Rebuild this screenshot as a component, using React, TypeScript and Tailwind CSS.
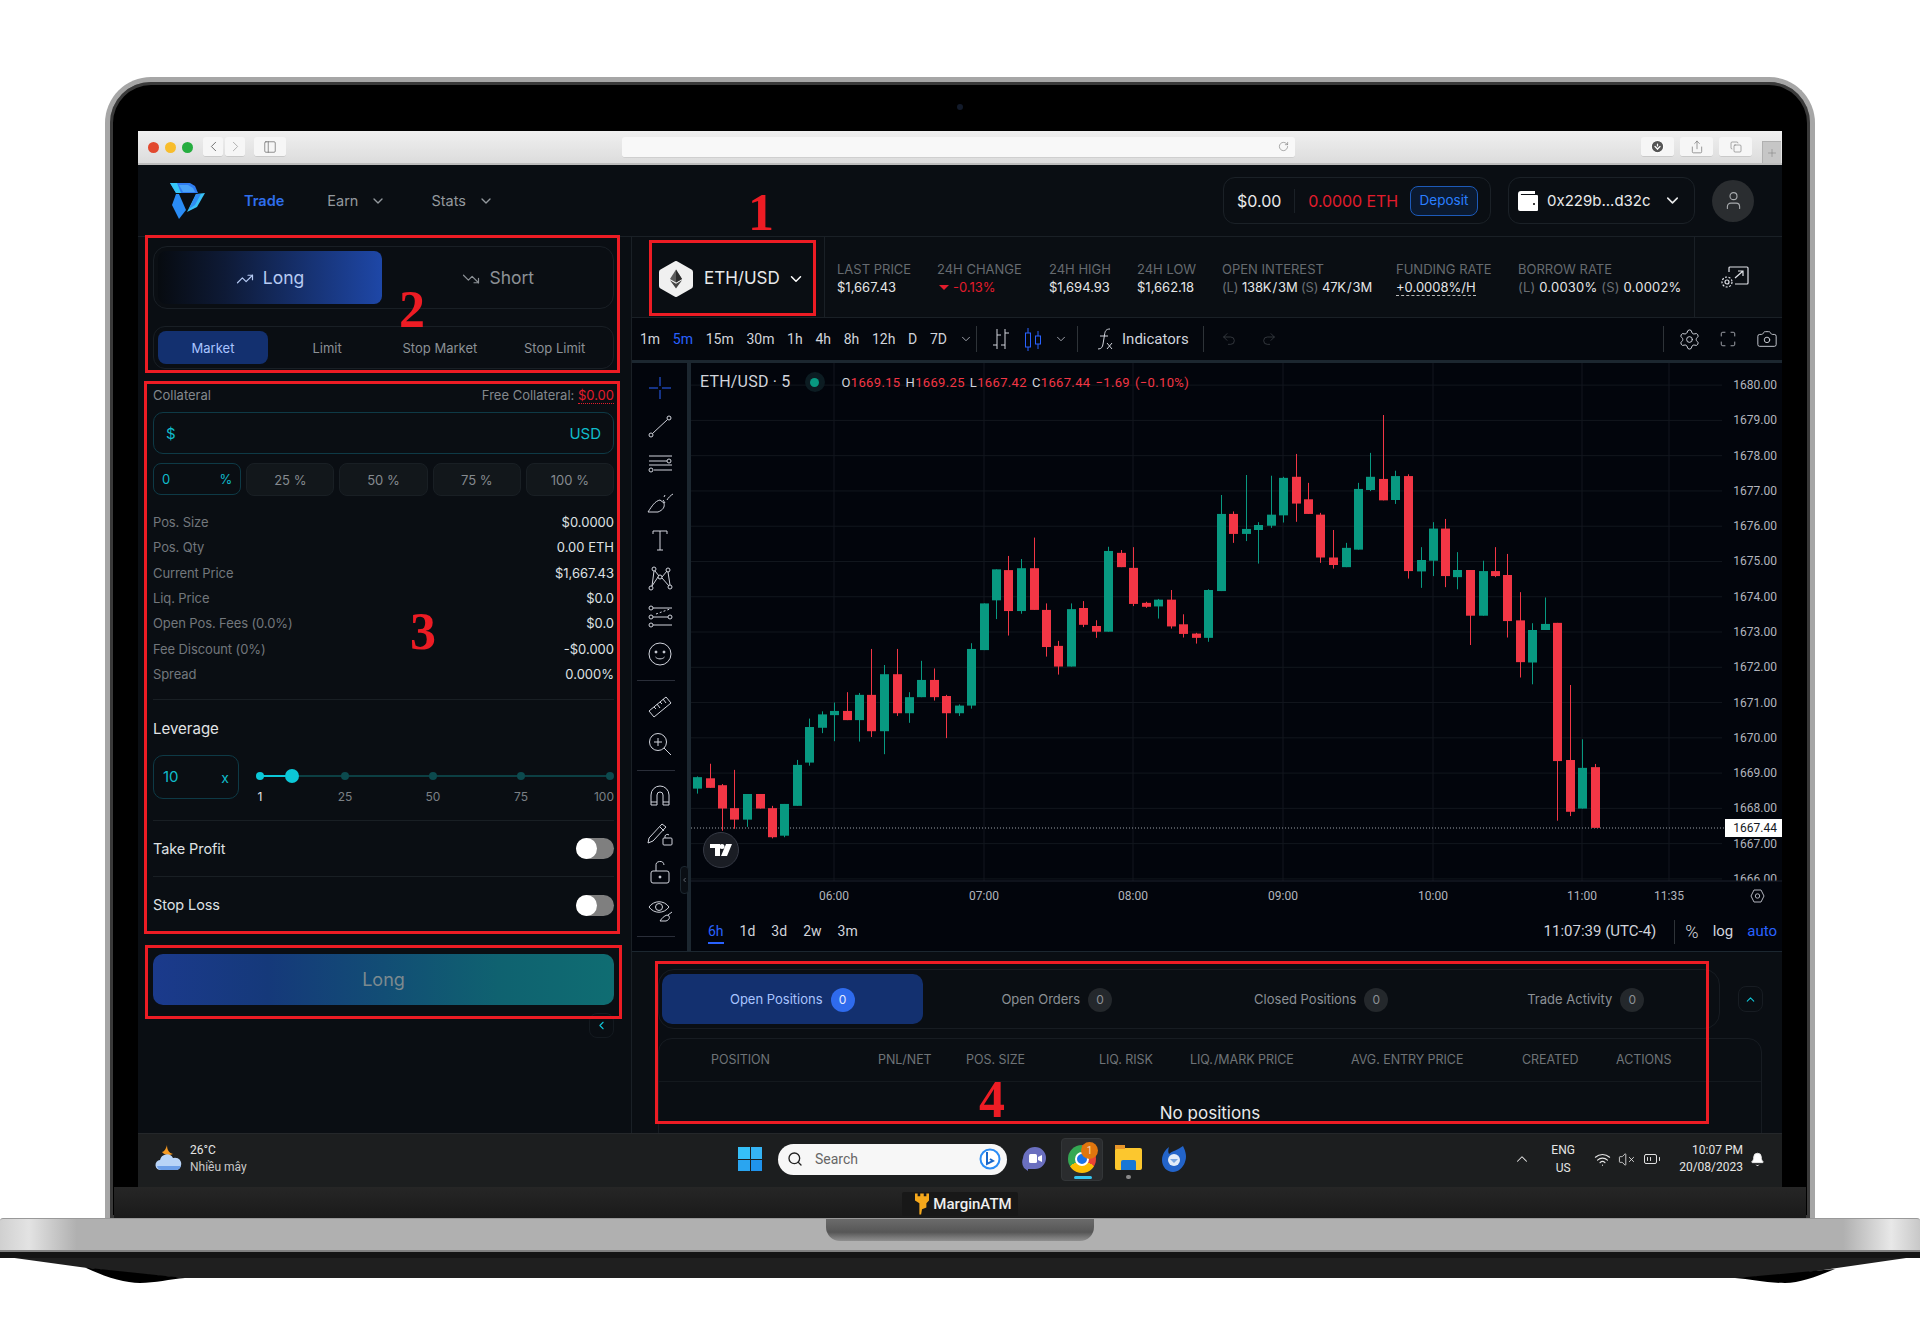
import React from "react";
import { ChevronDown, ChevronLeft, ChevronRight, ChevronUp, RotateCw, Search, TrendingUp, TrendingDown, User, ArrowDownCircle, Share, Copy, Plus, Undo2, Redo2, Settings, Maximize, Camera, Wifi, VolumeX, BatteryMedium, Bell, PanelLeft } from "lucide-react";

const RED = "#f23645";
const GREEN = "#089981";

// [green?, x, wickTop, bodyTop, bodyBottom, wickBottom]
const z6: [number, number, number, number, number, number][] = [
  [1,172,1088,1090,1120,1133],[0,209,1055,1093,1118,1118],[0,247,1108,1111,1172,1230],[0,283,1071,1171,1201,1225],
  [1,322,1134,1134,1201,1220],[0,360,1134,1134,1172,1172],[0,396,1165,1171,1247,1250],[1,433,1160,1160,1243,1247],
  [1,470,1045,1058,1165,1165],[1,508,937,959,1052,1060],[1,546,918,926,961,975],[1,583,895,917,928,996],
  [0,620,868,917,941,941],[1,658,870,875,941,997],[0,694,755,875,970,985],[1,733,797,821,970,1030],
  [0,770,755,821,923,930],[1,807,868,881,923,948],[1,844,786,836,881,881],[0,883,806,836,881,890],
  [0,919,875,878,923,988],[1,957,900,903,923,930],[1,994,740,755,903,911],[1,1031,636,636,758,758],
  [1,1069,547,547,628,677],[0,1105,512,549,656,720],[1,1144,520,544,656,663],[0,1182,464,544,653,653],
  [0,1218,636,653,750,775],[0,1255,734,747,801,822],[1,1294,636,651,801,801],[0,1330,630,648,692,698],
  [0,1368,680,695,710,726],[1,1405,488,499,710,710],
];
const z7: [number, number, number, number, number, number][] = [
  [0,46,420,428,468,468],[0,75,412,470,571,577],[0,102,565,568,579,582],[1,131,557,559,578,612],
  [0,159,532,559,634,640],[0,186,600,628,655,665],[0,214,652,654,666,682],[1,243,530,532,666,677],
  [1,270,266,319,535,535],[0,298,312,319,375,400],[1,326,210,361,375,395],[1,354,342,350,364,458],
  [1,382,212,321,352,358],[1,409,215,218,323,343],[0,438,151,215,290,341],[0,466,232,278,319,319],
  [0,493,316,321,441,456],[0,521,364,441,462,472],[1,550,400,414,468,468],[1,577,232,249,419,419],
  [1,605,148,215,252,255],[0,633,42,221,281,281],[1,661,198,213,280,291],[0,689,208,213,479,500],
  [1,718,412,448,480,526],[1,745,342,360,450,493],[0,773,333,360,493,524],[1,800,426,476,496,530],
  [0,828,476,476,604,686],[1,857,450,479,604,604],[0,884,412,479,493,496],[0,912,431,490,619,665],
  [0,940,538,617,734,777],[1,967,625,644,735,796],[1,996,553,627,644,644],[0,1024,624,624,1011,1178],
  [0,1052,798,1008,1153,1165],[1,1080,950,1030,1144,1144],[0,1108,1019,1028,1198,1198],
];
const candles = [
  ...z6.map(([g, x, a, b, c, d]) => ({ g, x: 640 + x / 3, a: 360 + a / 2.613, b: 360 + b / 2.613, c: 360 + c / 2.613, d: 360 + d / 2.613 })),
  ...z7.map(([g, x, a, b, c, d]) => ({ g, x: 1100 + x / 2.24, a: 400 + a / 2.8, b: 400 + b / 2.8, c: 400 + c / 2.8, d: 400 + d / 2.8 })),
];
const prices = [1680, 1679, 1678, 1677, 1676, 1675, 1674, 1673, 1672, 1671, 1670, 1669, 1668, 1667, 1666];
const yOf = (p: number) => 420.4 + (1679 - p) * 35.27;
const times = [["06:00", 834], ["07:00", 984], ["08:00", 1133], ["09:00", 1283], ["10:00", 1433], ["11:00", 1582], ["11:35", 1669]] as const;

function Chart() {
  return (
    <svg viewBox="691 363 1091 549" className="w-[1091px] h-[549px] block">
      {prices.map((p) => (
        <line key={p} x1={691} x2={1722} y1={yOf(p)} y2={yOf(p)} stroke="#12171e" />
      ))}
      {times.map(([t, x]) => (
        <line key={t} x1={x} x2={x} y1={363} y2={881} stroke="#12171e" />
      ))}
      <line x1={691} x2={1725} y1={828} y2={828} stroke="#9aa0a6" strokeDasharray="1 2" />
      {candles.map((k, i) => (
        <g key={i} fill={k.g ? GREEN : RED}>
          <rect x={Math.round(k.x)} y={k.a} width={1} height={Math.max(0, k.d - k.a)} />
          <rect x={Math.round(k.x) - 4} y={k.b} width={9} height={Math.max(1, k.c - k.b)} />
        </g>
      ))}
      {prices.map((p) => (
        <text key={p} x={1777} y={yOf(p) + 4} textAnchor="end" className="fill-[#b2b5be] text-[12px] font-[Roboto,sans-serif]">
          {p.toFixed(2)}
        </text>
      ))}
      <rect x={1725} y={819} width={57} height={18} fill="#fff" />
      <text x={1777} y={832} textAnchor="end" className="fill-[#131722] text-[12px] font-[Roboto,sans-serif]">1667.44</text>
      <rect x={691} y={881} width={1091} height={31} fill="#02050c" />
      <line x1={691} x2={1782} y1={881} y2={881} stroke="#1d232c" />
      {times.map(([t, x]) => (
        <text key={t} x={x} y={900} textAnchor="middle" className="fill-[#b2b5be] text-[12px] font-[Roboto,sans-serif]">{t}</text>
      ))}
      <path d="M1751 896l3-6h7l3 6-3 6h-7z" fill="none" stroke="#b2b5be" />
      <circle cx={1757.5} cy={896} r={2.2} fill="none" stroke="#b2b5be" />
    </svg>
  );
}

const Ic = ({ children, c = "#d1d4dc" }: { children: React.ReactNode; c?: string }) => (
  <svg width="28" height="28" viewBox="0 0 28 28" fill="none" stroke={c} strokeWidth="1">{children}</svg>
);

const tools: React.ReactNode[][] = [
  [
    <Ic c="#2962ff"><path d="M14 3v9M14 16v9M3 14h9M16 14h9" /></Ic>,
    <Ic><circle cx="5" cy="23" r="2" /><circle cx="23" cy="6" r="2" /><path d="M6.500 21.500L21.500 7.500" /></Ic>,
    <Ic><path d="M3 6h23M3 11h18M8 20h18M3 15h23" /><circle cx="23" cy="11" r="2" /><circle cx="5" cy="20" r="2" /></Ic>,
    <Ic><path d="M2 24h10c5-2 7-5 6-9l-4-3c-5 1-8 6-12 12zM17 12l2 3M21 12c1-2 4-5 6-6M19 7l-1 2" /></Ic>,
    <Ic><path d="M7 8V5h14v3M14 5v19M11 24h6" /></Ic>,
    <Ic><circle cx="5" cy="24" r="2" /><circle cx="8" cy="5" r="2" /><circle cx="22" cy="6" r="2" /><circle cx="24" cy="23" r="2" /><circle cx="14" cy="13" r="2" /><path d="M6 22L8 7M9 7l4 5M16 13l5-6M22 8l2 13M12 13L6 22M16 14l7 8" /></Ic>,
    <Ic><circle cx="5" cy="6" r="2" /><circle cx="5" cy="15" r="2" /><circle cx="5" cy="23" r="2" /><circle cx="24" cy="15" r="2" /><path d="M7 6h19M7 15h15M7 23h19" /><path d="M10 12l14-5" strokeDasharray="2 2" /></Ic>,
    <Ic><circle cx="14" cy="14" r="11" /><circle cx="10" cy="12" r="1" fill="#d1d4dc" /><circle cx="18" cy="12" r="1" fill="#d1d4dc" /><path d="M9.500 17c2 2.500 7 2.500 9 0" /></Ic>,
  ],
  [
    <Ic><path d="M3 19L20 5l5 6L8 25zM8 15l2 2M11 12l3 4M14 10l2 2M17 7l3 4" /></Ic>,
    <Ic><circle cx="12" cy="12" r="8.500" /><path d="M12 8v8M8 12h8M18 18l7 7" /></Ic>,
  ],
  [
    <Ic><path d="M5 23V13a9 9 0 0118 0v10h-6V13a3 3 0 00-6 0v10zM5 20h6M17 20h6" /></Ic>,
    <Ic><path d="M3 18L16 4l4 3L7 21l-5 2zM14 7l4 4" /><rect x="17" y="18" width="9" height="7" rx="1" /><path d="M19 18v-2a2.500 2.500 0 014-1" /></Ic>,
    <Ic><rect x="5" y="13" width="18" height="12" rx="2" /><path d="M10 13V8a4 4 0 018-1" /><circle cx="14" cy="19" r="1" fill="#d1d4dc" /></Ic>,
    <Ic><path d="M3 11c5-7 15-7 20 0-5 7-15 7-20 0z" /><circle cx="13" cy="11" r="3.500" /><path d="M14 25h6c3-1 4-3 3-5l-2-1c-3 1-5 3-7 6zM22 19l4-3" /></Ic>,
  ],
];

function Toolbar() {
  return (
    <div className="w-[55px] flex flex-col items-center pt-[6px]">
      {tools.map((g, i) => (
        <React.Fragment key={i}>
          {g.map((t, j) => (
            <div key={j} className="h-[38px] w-[38px] flex items-center justify-center">{t}</div>
          ))}
          <div className="w-[38px] border-t border-[#2a2e39] my-[6.500px] ml-[-8px]" />
        </React.Fragment>
      ))}
    </div>
  );
}

const Dd = ({ className = "" }: { className?: string }) => <ChevronDown className={className} size={14} strokeWidth={1.5} />;
const Sep = () => <div className="w-px h-[26px] bg-[#2e3338]" />;

const tfs = ["1m", "5m", "15m", "30m", "1h", "4h", "8h", "12h", "D", "7D"];
const stats = [
  { w: "w-[100px]", l: "LAST PRICE", v: <span>$1,667.43</span> },
  { w: "w-[112px]", l: "24H CHANGE", v: <span className="text-[#e21c2c] flex items-center gap-[4px]"><span className="w-0 h-0 border-l-[5px] border-r-[5px] border-t-[5px] border-l-transparent border-r-transparent border-t-[#e21c2c] ml-[2px]" />-0.13%</span> },
  { w: "w-[88px]", l: "24H HIGH", v: <span>$1,694.93</span> },
  { w: "w-[85px]", l: "24H LOW", v: <span>$1,662.18</span> },
  { w: "w-[174px]", l: "OPEN INTEREST", v: <span className="tracking-[-0.15px]"><span className="text-[#6b7075]">(L)</span> 138K{"\u200a/\u200a"}3M <span className="text-[#6b7075]">(S)</span> 47K{"\u200a/\u200a"}3M</span> },
  { w: "w-[122px]", l: "FUNDING RATE", v: <span className="border-b border-dashed border-[#bbb]">+0.0008%/H</span> },
  { w: "w-[176px]", l: "BORROW RATE", v: <span className="whitespace-nowrap tracking-[0.2px]"><span className="text-[#6b7075]">(L)</span> 0.0030% <span className="text-[#6b7075]">(S)</span> 0.0002%</span> },
];

const rows = [
  ["Pos. Size", "$0.0000"], ["Pos. Qty", "0.00 ETH"], ["Current Price", "$1,667.43"], ["Liq. Price", "$0.0"],
  ["Open Pos. Fees (0.0%)", "$0.0"], ["Fee Discount (0%)", "-$0.000"], ["Spread", "0.000%"],
];

function LeftPanel() {
  return (
    <div className="w-[494px] shrink-0 border-r border-[#1a2026] pl-[15px] pt-[9px]">
      <div className="w-[461px]">
        <div className="h-[63px] border border-[#191f25] rounded-[14px] p-[4px] grid grid-cols-2 gap-[8px]">
          <div className="w-[224px] rounded-[8px] bg-[linear-gradient(90deg,#070b10_0%,#0e1a36_30%,#1e47a7_100%)] flex items-center justify-center gap-[9px] text-[#b6caf2] text-[17.500px] pt-[2px]">
            <TrendingUp size={18} strokeWidth={1.6} /> Long
          </div>
          <div className="flex items-center justify-center gap-[9px] text-[#8c9196] text-[17.500px] pt-[2px]">
            <TrendingDown size={18} strokeWidth={1.6} /> Short
          </div>
        </div>
        <div className="mt-[17px] h-[43px] border border-[#191f25] rounded-[12px] p-[4px] grid grid-cols-4 text-[13px] text-[#8c9196]">
          <div className="w-[110px] rounded-[8px] bg-[#13306f] text-[#a9c4ff] flex items-center justify-center pt-[2px]">Market</div>
          <div className="flex items-center justify-center pt-[2px]">Limit</div>
          <div className="flex items-center justify-center whitespace-nowrap pt-[2px]">Stop Market</div>
          <div className="flex items-center justify-center whitespace-nowrap pt-[2px] pl-[4px]">Stop Limit</div>
        </div>
        <div className="mt-[19px] h-[16px] flex items-center justify-between text-[13px] text-[#83888d]">
          <span>Collateral</span>
          <span>Free Collateral: <span className="text-[#e21c2c] border-b border-dotted border-[#e21c2c]">$0.00</span></span>
        </div>
        <div className="mt-[8px] h-[42px] rounded-[10px] border border-[#0e3a46] flex items-center justify-between px-[12px] pt-[2px] text-[15px] text-[#10bccb]">
          <span>$</span><span>USD</span>
        </div>
        <div className="mt-[9px] h-[33px] grid grid-cols-5 gap-[5px] text-[13px] text-[#858a8f]">
          <div className="rounded-[8px] border border-[#0e3a46] flex items-center justify-between px-[8px] pt-[2px] text-[#10bccb] h-[32px]"><span>0</span><span>%</span></div>
          {["25 %", "50 %", "75 %", "100 %"].map((t) => (
            <div key={t} className="rounded-[8px] border border-[#191f24] bg-[#12171b] flex items-center justify-center pt-[2px]">{t}</div>
          ))}
        </div>
        <div className="mt-[13.500px]">
          {rows.map(([a, b]) => (
            <div key={a} className="h-[25.300px] pt-[1.500px] flex items-center justify-between text-[13px]">
              <span className="text-[#72777c] tracking-[-0.1px]">{a}</span><span className="text-[#dfe1e3]">{b}</span>
            </div>
          ))}
        </div>
        <div className="mt-[12.500px] border-t border-[#191f24]" />
        <div className="mt-[19px] h-[20px] flex items-center text-[15px] text-[#e2e4e6]">Leverage</div>
        <div className="mt-[16px] flex h-[44px]">
          <div className="w-[86px] h-[44px] rounded-[10px] border border-[#0e3a46] flex items-center justify-between px-[9px] text-[#10bccb] text-[15px]">
            <span>10</span><span className="text-[14px]">x</span>
          </div>
          <div className="ml-[17px] w-[358px]">
            <div className="relative mt-[14px] h-[14px] flex items-center">
              <div className="absolute left-[4px] right-[4px] top-[6px] h-[2px] bg-[#0c3f43]" />
              <div className="absolute left-[4px] w-[32px] top-[6px] h-[2px] bg-[#0cc8d8]" />
              <div className="absolute left-[29px] top-0 w-[14px] h-[14px] rounded-full bg-[#0cc8d8]" />
              <div className="relative w-[8px] h-[8px] rounded-full bg-[#0cc8d8]" />
              <div className="relative ml-[77px] w-[8px] h-[8px] rounded-full bg-[#0c4a4e]" />
              <div className="relative ml-[80px] w-[8px] h-[8px] rounded-full bg-[#0c4a4e]" />
              <div className="relative ml-[80px] w-[8px] h-[8px] rounded-full bg-[#0c4a4e]" />
              <div className="relative ml-[81px] w-[8px] h-[8px] rounded-full bg-[#0c4a4e]" />
            </div>
            <div className="mt-[5px] flex text-[12px] text-[#7b8085]">
              <span className="w-[8px] flex justify-center text-[#e2e4e6]">1</span>
              <span className="ml-[77px] w-[8px] flex justify-center">25</span>
              <span className="ml-[80px] w-[8px] flex justify-center">50</span>
              <span className="ml-[80px] w-[8px] flex justify-center">75</span>
              <span className="ml-[81px] w-[8px] flex justify-end">100</span>
            </div>
          </div>
        </div>
        <div className="mt-[21px] border-t border-[#191f24]" />
        {["Take Profit", "Stop Loss"].map((t, i) => (
          <div key={t} className={"h-[56px] flex items-center justify-between text-[14.500px] tracking-[-0.1px] text-[#dfe1e3] " + (i === 0 ? "border-b border-[#191f24]" : "")}>
            <span>{t}</span>
            <div className="w-[38px] h-[21px] rounded-full bg-[#7f7f7f] flex"><div className="w-[21px] h-[21px] rounded-full bg-white" /></div>
          </div>
        ))}
        <div className="mt-[21px] h-[51px] rounded-[10px] bg-[linear-gradient(90deg,#1b3a8c_0%,#15397a_25%,#0f6270_75%,#0f6d72_100%)] flex items-center justify-center text-[18px] text-[#7c8a8f]">Long</div>
        <div className="mt-[8px] ml-auto w-[25px] h-[25px] border border-[#141a20] rounded-[8px] flex items-center justify-center text-[#10c4d6]"><ChevronLeft size={13} /></div>
      </div>
    </div>
  );
}

function Logo() {
  return (
    <svg width="36" height="36" viewBox="0 0 36 36">
      <polygon points="0,0 20,0 25,3 28,10 6,10" fill="#2f7cf0" />
      <polygon points="0,0 7,0 11,10 6,10" fill="#35c6f7" />
      <polygon points="9,2 18,2 23,5 25,9 13,9" fill="#4aa2f7" />
      <polygon points="6,11 9,11 16,27 9,36 2,22" fill="#2a8cf5" />
      <polygon points="26,11 35,10 27,24 17,29" fill="#3ac0f5" />
      <polygon points="26,11 31,11 25,22 19,26" fill="#2f8df2" />
    </svg>
  );
}

function Header() {
  return (
    <div className="h-[72px] shrink-0 border-b border-[#1a2026] flex items-center pl-[32px] pr-[28px]">
      <Logo />
      <span className="ml-[38px] text-[14.500px] font-semibold text-[#2f6fec]">Trade</span>
      <span className="ml-[43px] text-[14.500px] text-[#94999e]">Earn</span>
      <ChevronDown className="ml-[12px] text-[#94999e]" size={16} />
      <span className="ml-[45px] text-[14.500px] text-[#94999e]">Stats</span>
      <ChevronDown className="ml-[12px] text-[#94999e]" size={16} />
      <div className="ml-auto w-[268px] h-[47px] border border-[#1b2127] rounded-[12px] flex items-center pl-[13px] text-[16px]">
        <span className="text-[#e9eaeb]">$0.00</span>
        <div className="ml-[13px] h-[24px] w-px bg-[#1b2127]" />
        <span className="ml-[13px] text-[#e21c2c] whitespace-nowrap tracking-[-0.1px]">0.0000 ETH</span>
        <div className="ml-[12px] w-[68px] h-[30px] shrink-0 rounded-[8px] border border-[#1d5ab8] bg-[#0b1a30] text-[#2a7fff] text-[13.500px] flex items-center justify-center">Deposit</div>
      </div>
      <div className="ml-[17px] w-[187px] h-[47px] border border-[#1b2127] rounded-[12px] flex items-center pl-[8px] text-[15px] text-[#e9eaeb]">
        <svg width="22" height="22" viewBox="0 0 22 22"><path d="M4 1h14v3H4a1 1 0 000 1h16a1 1 0 011 1v14a1 1 0 01-1 1H3a2 2 0 01-2-2V4a3 3 0 013-3z" fill="#fff" /><circle cx="17" cy="14" r="1" fill="#000" /></svg>
        <span className="ml-[8px] pt-[1px]">0x229b...d32c</span>
        <ChevronDown className="ml-[12px]" size={19} strokeWidth={2} />
      </div>
      <div className="ml-[17px] w-[42px] h-[42px] rounded-full bg-[#2a2d30] flex items-center justify-center text-[#a7aaad]"><User size={21} strokeWidth={1.3} /></div>
    </div>
  );
}

function MarketBar() {
  return (
    <div className="h-[81px] shrink-0 border-b border-[#1a2026] flex">
      <div className="w-[193px] shrink-0 border-r border-[#1a2026] flex items-center pl-[27px] pt-[3px]">
        <div className="w-[34px] h-[36px] relative flex items-center justify-center">
          <svg width="34" height="36" viewBox="0 0 34 36" className="absolute inset-0"><path d="M17 3L31 11V25L17 33L3 25V11Z" fill="#f0f0f0" stroke="#f0f0f0" strokeWidth="6" strokeLinejoin="round" /></svg>
          <svg width="12" height="20" viewBox="0 0 14 22" className="relative"><path d="M7 0L0 11l7 4 7-4z" fill="#5c5c5c" /><path d="M7 0l7 11-7 4z" fill="#2d2d2d" /><path d="M0 12.500L7 22l7-9.500-7 4z" fill="#444" /></svg>
        </div>
        <span className="ml-[11px] text-[17px] text-[#e8e9ea]">ETH/USD</span>
        <ChevronDown className="ml-[7px] text-white" size={18} strokeWidth={2} />
      </div>
      <div className="flex pl-[12px] pt-[23px] text-[13px] leading-[18px]">
        {stats.map((s) => (
          <div key={s.l} className={s.w + " shrink-0"}>
            <div className="text-[#666b70] whitespace-nowrap">{s.l}</div>
            <div className="text-[#e5e6e7] whitespace-nowrap">{s.v}</div>
          </div>
        ))}
      </div>
      <div className="ml-auto w-[88px] border-l border-[#1a2026] flex items-center justify-center pr-[8px]">
        <svg width="30" height="24" viewBox="0 0 30 24" fill="none" stroke="#e0e2e8" strokeWidth="1.200"><path d="M9 7V3a1 1 0 011-1h17a1 1 0 011 1v15a1 1 0 01-1 1H15" /><path d="M15 13l8-7M18 6h5v5" /><circle cx="7" cy="17" r="2" /><circle cx="7" cy="17" r="5" strokeDasharray="2 1.500" /></svg>
      </div>
    </div>
  );
}

function ChartToolbar() {
  return (
    <div className="h-[45px] shrink-0 border-b-[3px] border-[#1c2730] bg-[#04070d] flex items-center pl-[8px] font-[Roboto,sans-serif] text-[14px] text-[#d1d4dc]">
      <div className="flex gap-[12.700px]">
        {tfs.map((t) => <span key={t} className={t === "5m" ? "text-[#2962ff]" : ""}>{t}</span>)}
      </div>
      <Dd className="ml-[12px] text-[#b2b5be]" />
      <div className="ml-[3px]"><Sep /></div>
      <div className="ml-[10px]"><Ic><path d="M10 4v20M6 20h4M18 4v20M14 20h4M18 8h4M10 10h4" /></Ic></div>
      <div className="ml-[4px]"><Ic c="#2962ff"><path d="M9 3v5M9 22v4M19 6v5M19 19v5" /><rect x="6.500" y="8" width="5" height="14" /><rect x="16.500" y="11" width="5" height="8" /></Ic></div>
      <Dd className="ml-[7px] text-[#b2b5be]" />
      <div className="ml-[9px]"><Sep /></div>
      <div className="ml-[12px]"><Ic><path d="M20 4c-4 0-5 2-5.500 6l-1.500 9c-.5 3-1.500 5-5 5M10 11h8M17 18l5 6M22 18l-5 6" /></Ic></div>
      <span className="ml-[4px] text-[15px]">Indicators</span>
      <div className="ml-[14px]"><Sep /></div>
      <Undo2 className="ml-[17px] text-[#3d4147]" size={16} strokeWidth={1.2} />
      <Redo2 className="ml-[24px] text-[#3d4147]" size={16} strokeWidth={1.2} />
      <div className="ml-auto"><Sep /></div>
      <Settings className="ml-[14px] mr-[1px] text-[#d1d4dc]" size={23} strokeWidth={1} />
      <Maximize className="ml-[17px] text-[#d1d4dc]" size={18} strokeWidth={1} />
      <Camera className="ml-[19px] mr-[4px] text-[#d1d4dc]" size={22} strokeWidth={1} />
    </div>
  );
}

function ChartPane() {
  return (
    <div className="h-[588px] shrink-0 bg-[#02050c] flex font-[Roboto,sans-serif]">
      <Toolbar />
      <div className="w-[4px] bg-[#1c2730] relative">
        <div className="absolute left-[-7px] top-[503px] w-[9px] h-[28px] rounded-[4px] bg-[#0a0e14] border border-[#1c2730] flex items-center justify-center text-[#9ca3af]"><ChevronLeft size={8} /></div>
      </div>
      <div className="relative w-[1091px]">
        <Chart />
        <div className="absolute left-[9px] top-[7px] flex items-center text-[16px] tracking-[0.2px] text-[#d1d4dc]">
          <span>ETH/USD · 5</span>
          <div className="ml-[14px] w-[20px] h-[20px] rounded-full bg-[#0c1c22] flex items-center justify-center"><div className="w-[9px] h-[9px] rounded-full bg-[#089981]" /></div>
          <div className="ml-[17px] pt-[1px] flex gap-[5px] text-[13px] tracking-[0.35px] text-[#f23645] whitespace-nowrap">
            <span><span className="text-[#d1d4dc]">O</span>1669.15</span>
            <span><span className="text-[#d1d4dc]">H</span>1669.25</span>
            <span><span className="text-[#d1d4dc]">L</span>1667.42</span>
            <span><span className="text-[#d1d4dc]">C</span>1667.44</span>
            <span>−1.69</span>
            <span>(−0.10%)</span>
          </div>
        </div>
        <div className="absolute left-[12px] top-[469px] w-[36px] h-[36px] rounded-full bg-[#1a1d24] border border-[#363a45] flex items-center justify-center">
          <svg width="22" height="12" viewBox="0 0 22 12" fill="#fff"><path d="M0 0h10v12H5V4H0zM12 0a2.500 2.500 0 110 5 2.500 2.500 0 010-5zM16 0h6l-5 12h-6z" /></svg>
        </div>
        <div className="h-[39px] pl-[17px] pr-[5px] flex items-center text-[14px] text-[#d1d4dc]">
          <div className="flex gap-[16px]">
            {["6h", "1d", "3d", "2w", "3m"].map((t, i) => (
              <span key={t} className={"relative " + (i === 0 ? "text-[#2962ff]" : "")}>{t}{i === 0 && <span className="absolute left-0 right-0 top-[21px] h-[2px] bg-[#2962ff]" />}</span>
            ))}
          </div>
          <span className="ml-auto text-[15px]">11:07:39 (UTC-4)</span>
          <div className="ml-[18px] w-px h-[24px] bg-[#2e3338]" />
          <span className="ml-[10px] text-[18px] font-light">%</span>
          <span className="ml-[14px] text-[15px]">log</span>
          <span className="ml-[14px] text-[15px] text-[#2962ff]">auto</span>
        </div>
      </div>
    </div>
  );
}

const tabs = ["Open Positions", "Open Orders", "Closed Positions", "Trade Activity"];

function Positions() {
  return (
    <div className="h-[182px] shrink-0 overflow-hidden border-t border-[#1c2730] pl-[26px] pt-[17px]">
      <div className="flex items-center">
        <div className="w-[1062px] h-[60px] border border-[#171c22] rounded-[16px] px-[3px] py-[4px] grid grid-cols-4 gap-[4px]">
          {tabs.map((t, i) => (
            <div key={t} className={"rounded-[10px] flex items-center justify-center gap-[8px] pt-[1px] text-[13px] " + (i === 0 ? "bg-[#13306f] text-[#a9c4ff]" : "text-[#8c9196]")}>
              {t}
              <span className={"w-[24px] h-[24px] rounded-full flex items-center justify-center text-[12px] " + (i === 0 ? "bg-[#2f6bed] text-[#e6edff]" : "bg-[#24282c] text-[#8c9196]")}>0</span>
            </div>
          ))}
        </div>
        <div className="ml-[18px] w-[25px] h-[26px] border border-[#171c22] rounded-[8px] flex items-center justify-center text-[#10c4d6]"><ChevronUp size={13} /></div>
      </div>
      <div className="mt-[9px] w-[1104px] h-[100px] border border-[#171c22] rounded-t-[14px]">
        <div className="h-[43px] border-b border-[#14191e] pl-[52px] grid grid-cols-[167px_88px_133px_91px_161px_171px_94px_1fr] items-center text-[12.500px] tracking-[-0.05px] text-[#6f7478] whitespace-nowrap">
          {["POSITION", "PNL/NET", "POS. SIZE", "LIQ. RISK", "LIQ.\u200a/MARK PRICE", "AVG. ENTRY PRICE", "CREATED", "ACTIONS"].map((h) => <span key={h}>{h}</span>)}
        </div>
        <div className="mt-[21px] text-center text-[17px] text-[#e9eaeb] leading-[20px]">No positions</div>
      </div>
    </div>
  );
}

function BrowserBar() {
  const B = ({ w, children }: { w: string; children: React.ReactNode }) => (
    <div className={w + " h-[20px] rounded-[3px] bg-[#f6f6f6] border-b border-[#c9c9c9] flex items-center justify-center text-[#666]"}>{children}</div>
  );
  return (
    <div className="h-[34px] shrink-0 bg-[linear-gradient(180deg,#f0f0f0,#dcdcdc)] border-b-[2px] border-[#bdbdbd] flex items-center pl-[10px]">
      <div className="flex gap-[6px]">
        <div className="w-[11px] h-[11px] rounded-full bg-[#e2492f]" />
        <div className="w-[11px] h-[11px] rounded-full bg-[#f8bd2c]" />
        <div className="w-[11px] h-[11px] rounded-full bg-[#25ad3f]" />
      </div>
      <div className="ml-[10px] flex gap-[2px]">
        <B w="w-[20px]"><ChevronLeft size={17} strokeWidth={1.3} /></B>
        <B w="w-[20px]"><ChevronRight size={17} strokeWidth={1.3} className="text-[#aaa]" /></B>
      </div>
      <div className="ml-[9px]"><B w="w-[32px]"><PanelLeft size={14} strokeWidth={1.2} /></B></div>
      <div className="ml-[336px] w-[673px] h-[21px] rounded-[3px] bg-[#f8f8f8] border-b border-[#cfcfcf] flex items-center justify-end pr-[6px] text-[#777]"><RotateCw size={11} strokeWidth={1.3} /></div>
      <div className="ml-[346px] flex gap-[6px]">
        <B w="w-[33px]"><ArrowDownCircle size={15} fill="#555" stroke="#fff" /></B>
        <B w="w-[33px]"><Share size={14} strokeWidth={1.1} /></B>
        <B w="w-[33px]"><Copy size={12} strokeWidth={1.1} /></B>
      </div>
      <div className="ml-[10px] self-end w-[19px] h-[22px] bg-[#c6c6c6] border-l border-t border-[#b0b0b0] flex items-center justify-center text-[#777]"><Plus size={12} strokeWidth={1} /></div>
    </div>
  );
}

function Taskbar() {
  return (
    <div className="h-[54px] shrink-0 bg-[#1c1e1f] border-t border-[#24272a] flex items-center pb-[3px] font-[Roboto,sans-serif] text-[12px] text-[#e5e5e5]">
      <div className="w-[600px] shrink-0 flex items-center pl-[17px]">
        <svg width="28" height="30" viewBox="0 0 28 30"><path d="M12 1c0 5 2 8 6 9-4 2-9 1-11-2 2 0 4-3 5-7z" fill="#f59a23" /><path d="M6 26a5 5 0 01-1-10 7 7 0 0113-2 6 6 0 014 12z" fill="#b9d4f7" /><path d="M6 26a5 5 0 01-4-4h24a6 6 0 01-4 4z" fill="#6d9fe8" /></svg>
        <div className="ml-[7px] leading-[17px]">
          <div>26°C</div>
          <div className="text-[#c9c9c9]">Nhiều mây</div>
        </div>
      </div>
      <div className="w-[24px] h-[24px] grid grid-cols-2 gap-[1px]">
        <div className="bg-[#35c0f8]" /><div className="bg-[#35b4f5]" /><div className="bg-[#2aa5f0]" /><div className="bg-[#1f93ec]" />
      </div>
      <div className="ml-[16px] w-[229px] h-[31px] rounded-full bg-[#f7f7f7] flex items-center pl-[9px] pr-[6px] text-[14px] text-[#666]">
        <Search size={16} className="text-[#222]" strokeWidth={2} />
        <span className="ml-[12px]">Search</span>
        <svg className="ml-auto" width="22" height="26" viewBox="0 0 22 26"><circle cx="11" cy="13" r="9.500" fill="#fff" stroke="#2a8cf5" strokeWidth="2" /><path d="M8 6v12l6-3-3-2" fill="none" stroke="#1967c9" strokeWidth="2" /></svg>
      </div>
      <svg className="ml-[15px]" width="26" height="26" viewBox="0 0 26 26"><path d="M13 1a11 11 0 0111 11 11 11 0 01-11 11H6v2l-4-3a11 11 0 01-1-10A12 12 0 0113 1z" fill="#6a6fbf" /><rect x="7" y="8" width="8" height="9" rx="1.500" fill="#fff" /><path d="M16 11l4-2v7l-4-2z" fill="#fff" /></svg>
      <div className="relative ml-[13px] w-[42px] h-[43px] rounded-[4px] bg-[#2a2c2e] border border-[#333638] flex items-center justify-center">
        <div className="w-[28px] h-[28px] rounded-full bg-[conic-gradient(#ea4335_0deg_120deg,#fbbc05_120deg_240deg,#34a853_240deg_360deg)] flex items-center justify-center">
          <div className="w-[14px] h-[14px] rounded-full bg-[#1a73e8] border-[2px] border-white" />
        </div>
        <div className="absolute right-[4px] top-[3px] w-[17px] h-[17px] rounded-full bg-[#e0760e] text-[10px] text-[#f6dcc0] flex items-center justify-center">1</div>
        <div className="absolute left-[12px] bottom-[1px] w-[18px] h-[3px] rounded-full bg-[#35c5f0]" />
      </div>
      <div className="relative ml-[12px] w-[27px] h-[22px] rounded-[2px] bg-[#fcc72e] flex items-end justify-center">
        <div className="absolute left-0 top-[-3px] w-[10px] h-[4px] bg-[#e8962a]" />
        <div className="w-[15px] h-[10px] bg-[#1877d6] rounded-t-[2px]" />
        <div className="absolute left-[11px] bottom-[-9px] w-[5px] h-[4px] rounded-full bg-[#8a8a8a]" />
      </div>
      <svg className="ml-[19px]" width="26" height="28" viewBox="0 0 26 28"><path d="M22 1c3 6 4 11 2 16-2 6-7 10-12 10C6 27 1 22 1 15 1 9 5 4 8 2c-1 3-1 5 0 7 3-3 9-4 14-8z" fill="#2364c9" /><circle cx="13" cy="15" r="6" fill="#e3ecf8" /><path d="M9 14h8l-4 4z" fill="#7ba6e0" /></svg>
      <div className="ml-auto flex items-center pr-[17px]">
        <ChevronUp size={18} strokeWidth={1.4} />
        <div className="ml-[19px] text-center leading-[18px] w-[26px]"><div>ENG</div><div>US</div></div>
        <Wifi className="ml-[18px]" size={17} strokeWidth={1.6} />
        <VolumeX className="ml-[7px]" size={17} strokeWidth={1.2} />
        <BatteryMedium className="ml-[8px]" size={18} strokeWidth={1.3} />
        <div className="ml-[18px] text-right leading-[17px]"><div>10:07 PM</div><div>20/08/2023</div></div>
        <Bell className="ml-[7px]" size={15} strokeWidth={1.5} fill="#fff" />
      </div>
    </div>
  );
}

function Screen() {
  return (
    <div className="w-[1644px] h-[1056px] flex flex-col">
      <BrowserBar />
      <div className="h-[968px] shrink-0 bg-[#0a0e13] flex flex-col font-[Inter,sans-serif]">
        <Header />
        <div className="flex h-[896px]">
          <LeftPanel />
          <div className="w-[1150px] flex flex-col">
            <MarketBar />
            <ChartToolbar />
            <ChartPane />
            <Positions />
          </div>
        </div>
      </div>
      <Taskbar />
    </div>
  );
}

function Annotations() {
  const box = "absolute border-[3px] border-[#ed1c24]";
  const num = "absolute text-[52px] leading-none font-bold text-[#ed1c24] font-['Liberation_Serif',serif]";
  return (
    <>
      <div className={box + " left-[649px] top-[240px] w-[167px] h-[76px]"} />
      <div className={box + " left-[145px] top-[235px] w-[475px] h-[138px]"} />
      <div className={box + " left-[144px] top-[381px] w-[476px] h-[553px]"} />
      <div className={box + " left-[145px] top-[945px] w-[477px] h-[74px]"} />
      <div className={box + " left-[655px] top-[961px] w-[1054px] h-[163px]"} />
      <div className={num + " left-[748px] top-[187px]"}>1</div>
      <div className={num + " left-[399px] top-[284px]"}>2</div>
      <div className={num + " left-[410px] top-[606px]"}>3</div>
      <div className={num + " left-[979px] top-[1074px]"}>4</div>
    </>
  );
}

export default function App() {
  return (
    <div className="relative w-[1920px] h-[1338px] bg-white overflow-hidden pt-[77px]">
      <div className="mx-[105px] h-[1141px] rounded-t-[46px] bg-black border-[5px] border-b-0 border-[#a6a6a6] shadow-[inset_0_0_0_3px_#3a3a3a] flex flex-col">
        <div className="h-[1105px] shrink-0 px-[28px] pt-[49px]">
          <Screen />
        </div>
        <div className="h-[31px] shrink-0 mx-[4px] bg-[linear-gradient(180deg,#262626,#1a1a1a)] flex items-center justify-center pt-[3px]">
          <div className="flex items-center bg-[#181818] pl-[13px] pr-[6px] h-[24px] rounded-[2px] font-[Roboto,sans-serif] text-[15px] text-[#eee] font-medium">
            <svg width="14" height="24" viewBox="0 0 16 24" fill="#f5a81c"><path d="M0 0h3v3h3V0h4v3h3V0h3v8l-3 3v5l-5 2-1 6H5V11L0 8z" /></svg>
            <span className="ml-[4px]">MarginATM</span>
          </div>
        </div>
      </div>
      <div className="h-[34px] bg-[linear-gradient(90deg,#d0d0d0_0%,#e3e3e3_1.500%,#b0b0b0_4%,#b0b0b0_96%,#e8e8e8_98.500%,#c8c8c8_100%)] border-t border-[#999] border-b-[2px] border-b-[#808080] rounded-t-[3px] flex justify-center">
        <div className="w-[268px] h-[22px] rounded-b-[14px] bg-[linear-gradient(180deg,#6b6b6b,#565656_60%,#8f8f8f)]" />
      </div>
      <svg width="1920" height="34" viewBox="0 0 1920 34" className="block">
        <path d="M0 0H1920V4L1830 17Q1800 22 1740 26H182Q130 22 80 15L0 4Z" fill="#1f1f1f" />
        <path d="M0 0H1920V6H0Z" fill="#141414" />
        <path d="M85 15.500C105 25 125 31 140 31C155 31 170 27 185 26ZM1735 26C1750 27 1765 31 1785 31C1800 31 1815 25 1835 17Z" fill="#000" />
      </svg>
      <div className="absolute left-[957px] top-[104px] w-[6px] h-[6px] rounded-full bg-[#121a2a]" />
      <Annotations />
    </div>
  );
}
